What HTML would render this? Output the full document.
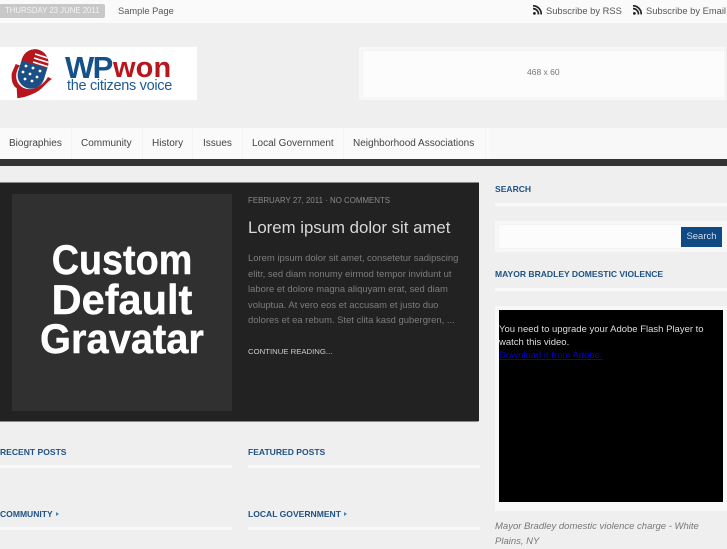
<!DOCTYPE html>
<html><head><meta charset="utf-8"><style>
html,body{margin:0;padding:0}
body{width:727px;height:545px;overflow:hidden;position:relative;background:#efefef;font-family:"Liberation Sans",sans-serif;color:#555}
.a{position:absolute;white-space:nowrap}
.w{background:#fafafa}
.h{font-weight:bold;font-size:8.55px;color:#1f5285;line-height:12px}
.r{position:absolute;height:3px;background:#f9f9f9}
.n{position:absolute;top:137px;font-size:10px;line-height:14px;color:#444;white-space:nowrap}
.d{position:absolute;top:128px;width:1px;height:31px;background:#f3f3f3}
.p{position:absolute;left:248px;font-size:9.45px;line-height:15.6px;color:#7d7d7d;white-space:nowrap}
.g{position:absolute;left:12px;width:220px;text-align:center;font-size:41.5px;font-weight:bold;line-height:40px;color:#fff;-webkit-text-stroke:.4px #fff}
</style></head><body>
<div class="a w" style="left:0;top:0;width:727px;height:23px"></div>
<div class="a" style="left:0;top:4px;width:105px;height:14px;background:#c8c8c8;border-radius:0 2px 2px 0"></div>
<div class="a" style="left:5px;top:6px;font-size:7.8px;line-height:10px;color:#f3f3f3">THURSDAY 23 JUNE 2011</div>
<div class="a" style="left:118px;top:5px;font-size:9.3px;line-height:12px;color:#555">Sample Page</div>
<svg class="a" style="left:533px;top:5px" width="9" height="10" viewBox="0 0 9 10"><circle cx="1.4" cy="8.4" r="1.4" fill="#222"/><path d="M0 3.6a5.4 5.4 0 0 1 5.4 5.8M0 .8a8.2 8.2 0 0 1 8.2 8.6" fill="none" stroke="#222" stroke-width="1.7"/></svg>
<div class="a" style="left:546px;top:5px;font-size:9.35px;line-height:13px;color:#555">Subscribe by RSS</div>
<svg class="a" style="left:633px;top:5px" width="9" height="10" viewBox="0 0 9 10"><circle cx="1.4" cy="8.4" r="1.4" fill="#222"/><path d="M0 3.6a5.4 5.4 0 0 1 5.4 5.8M0 .8a8.2 8.2 0 0 1 8.2 8.6" fill="none" stroke="#222" stroke-width="1.7"/></svg>
<div class="a" style="left:646px;top:5px;font-size:9.35px;line-height:13px;color:#555">Subscribe by Email</div>

<div class="a" style="left:0;top:47px;width:197px;height:53px;background:#fff"></div>
<svg class="a" style="left:10px;top:48px" width="44" height="52" viewBox="0 0 44 52">
<defs><clipPath id="c"><rect x="9.5" y="1" width="27" height="40" rx="13.5" transform="rotate(17 23 21)"/></clipPath></defs>
<path d="M5.7 16L1.7 25.3C1 33 3 38 6.7 40.3L7.3 50.3C17 49 28 45 34 38C38 34 40 32 42 31L38 29C35 34 30 39 22 41C14 42 9 38 7 33C5 27 7 21 10 17.5Z" fill="#b8161d"/>
<g clip-path="url(#c)">
<rect x="0" y="0" width="44" height="44" fill="#1d4f87"/>
<path d="M0 9L44 22L44 0L0 0Z" fill="#b8161d"/>
<path d="M25 6l16 5M24 10l16 5M23 14l16 5" stroke="#fff" stroke-width="1.7" fill="none"/>
<g fill="#fff"><circle cx="16" cy="18" r="1.4"/><circle cx="23" cy="20" r="1.4"/><circle cx="30" cy="23" r="1.4"/><circle cx="13" cy="24" r="1.4"/><circle cx="20" cy="26" r="1.4"/><circle cx="27" cy="29" r="1.4"/><circle cx="15" cy="31" r="1.4"/><circle cx="22" cy="33" r="1.4"/></g>
</g>
</svg>
<div class="a" style="left:65px;top:50px;font-size:31px;font-weight:bold;line-height:36px;letter-spacing:-1.6px;color:#14508a">WP</div>
<div class="a" style="left:113px;top:50px;font-size:29px;font-weight:bold;line-height:36px;letter-spacing:.1px;color:#b8161d">won</div>
<div class="a" style="left:67px;top:78px;font-size:14.5px;line-height:17px;letter-spacing:-.3px;color:#1e5b93">the citizens voice</div>

<div class="a" style="left:359px;top:47px;width:367px;height:53px;background:#f7f7f7"></div>
<div class="a" style="left:362px;top:50px;width:361px;height:46px;background:#fcfcfc;border:1px dotted #ededed"></div>
<div class="a" style="left:527px;top:67px;font-size:8.5px;line-height:11px;color:#777">468 x 60</div>

<div class="a" style="left:0;top:128px;width:727px;height:31px;background:#f8f8f8"></div>
<div class="a" style="left:0;top:128px;width:489px;height:31px;background:#fafafa"></div>
<div class="a" style="left:0;top:159px;width:727px;height:7px;background:#333"></div>
<div class="d" style="left:71px"></div><div class="d" style="left:142px"></div><div class="d" style="left:192px"></div><div class="d" style="left:242px"></div><div class="d" style="left:343px"></div><div class="d" style="left:485px"></div>
<div class="n" style="left:9px">Biographies</div>
<div class="n" style="left:81px">Community</div>
<div class="n" style="left:152px">History</div>
<div class="n" style="left:203px">Issues</div>
<div class="n" style="left:252px">Local Government</div>
<div class="n" style="left:353px">Neighborhood Associations</div>

<div class="a" style="left:0;top:182px;width:479px;height:240px;background:#888;border-radius:0 0 2px 0"></div>
<div class="a" style="left:0;top:183px;width:479px;height:238px;background:#222"></div>
<div class="a" style="left:12px;top:194px;width:220px;height:217px;background:#303030"></div>
<div class="g" style="top:240px;transform:scaleX(.91)">Custom</div>
<div class="g" style="top:280px;transform:scaleX(1.0)">Default</div>
<div class="g" style="top:319px;transform:scaleX(.96)">Gravatar</div>
<div class="a" style="left:248px;top:196px;font-size:7.9px;line-height:10px;color:#8a8a8a">FEBRUARY 27, 2011 &middot; NO COMMENTS</div>
<div class="a" style="left:248px;top:217px;font-size:16.8px;line-height:21px;color:#d8d8d8">Lorem ipsum dolor sit amet</div>
<div class="p" style="top:251px">Lorem ipsum dolor sit amet, consetetur sadipscing</div>
<div class="p" style="top:266.6px">elitr, sed diam nonumy eirmod tempor invidunt ut</div>
<div class="p" style="top:282.2px">labore et dolore magna aliquyam erat, sed diam</div>
<div class="p" style="top:297.8px">voluptua. At vero eos et accusam et justo duo</div>
<div class="p" style="top:313.4px">dolores et ea rebum. Stet clita kasd gubergren, ...</div>
<div class="a" style="left:248px;top:347px;font-size:7.75px;line-height:10px;color:#ccc">CONTINUE READING...</div>

<div class="a h" style="left:0;top:446px">RECENT POSTS</div>
<div class="r" style="left:0;top:465px;width:232px"></div>
<div class="a h" style="left:248px;top:446px">FEATURED POSTS</div>
<div class="r" style="left:248px;top:465px;width:232px"></div>
<div class="a h" style="left:0;top:508px">COMMUNITY</div>
<div class="a" style="left:56px;top:512px;width:0;height:0;border-left:3px solid #3f86b5;border-top:2px solid transparent;border-bottom:2px solid transparent"></div>
<div class="r" style="left:0;top:527px;width:232px"></div>
<div class="a h" style="left:248px;top:508px">LOCAL GOVERNMENT</div>
<div class="a" style="left:344px;top:512px;width:0;height:0;border-left:3px solid #3f86b5;border-top:2px solid transparent;border-bottom:2px solid transparent"></div>
<div class="r" style="left:248px;top:527px;width:232px"></div>

<div class="a h" style="left:495px;top:183px">SEARCH</div>
<div class="r" style="left:495px;top:203px;width:232px"></div>
<div class="a" style="left:495px;top:221px;width:232px;height:31px;background:#f7f7f7"></div>
<div class="a" style="left:498px;top:224px;width:182px;height:23px;background:#fcfcfc;border:1px solid #f3f3f3"></div>
<div class="a" style="left:681px;top:227px;width:41px;height:20px;background:#0f4a84;color:#cfdcea;font-size:9.5px;line-height:20px;text-align:center">Search</div>
<div class="a h" style="left:495px;top:268px">MAYOR BRADLEY DOMESTIC VIOLENCE</div>
<div class="r" style="left:495px;top:288px;width:232px"></div>
<div class="a" style="left:495px;top:306px;width:232px;height:205px;background:#f8f8f8"></div>
<div class="a" style="left:499px;top:310px;width:224px;height:192px;background:#000"></div>
<div class="a" style="left:499px;top:323px;font-size:9.5px;line-height:13px;color:#ddd">You need to upgrade your Adobe Flash Player to<br>watch this video.<br><span style="color:#0000d0;text-decoration:underline">Download it from Adobe.</span></div>
<div class="a" style="left:495px;top:519px;font-size:9.5px;font-style:italic;line-height:15px;color:#777">Mayor Bradley domestic violence charge - White<br>Plains, NY</div>
</body></html>
